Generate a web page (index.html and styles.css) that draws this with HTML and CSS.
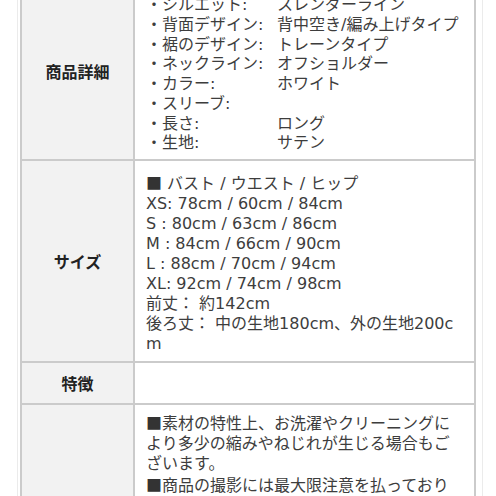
FILE: index.html
```html
<!DOCTYPE html>
<html lang="ja">
<head>
<meta charset="utf-8">
<title>商品詳細</title>
<link rel="stylesheet" href="styles.css">
</head>
<body>
<div class="page">
  <table class="spec">
    <tr>
      <th>商品詳細</th>
      <td class="detail">
        <dl class="kv">
          <dt>・シルエット:</dt><dd>スレンダーライン</dd>
          <dt>・背面デザイン:</dt><dd>背中空き/編み上げタイプ</dd>
          <dt>・裾のデザイン:</dt><dd>トレーンタイプ</dd>
          <dt>・ネックライン:</dt><dd>オフショルダー</dd>
          <dt>・カラー:</dt><dd>ホワイト</dd>
          <dt>・スリーブ:</dt><dd></dd>
          <dt>・長さ:</dt><dd>ロング</dd>
          <dt>・生地:</dt><dd>サテン</dd>
        </dl>
      </td>
    </tr>
    <tr>
      <th>サイズ</th>
      <td class="size">
        <p><span class="sq">■</span> バスト / ウエスト / ヒップ</p>
        <p>XS: 78cm / 60cm / 84cm</p>
        <p>S : 80cm / 63cm / 86cm</p>
        <p>M : 84cm / 66cm / 90cm</p>
        <p>L : 88cm / 70cm / 94cm</p>
        <p>XL: 92cm / 74cm / 98cm</p>
        <p>前丈： 約142cm</p>
        <p>後ろ丈： 中の生地180cm、外の生地200cm</p>
      </td>
    </tr>
    <tr class="feature">
      <th>特徴</th>
      <td></td>
    </tr>
    <tr>
      <th>注意事項</th>
      <td class="note">
        <p><span class="sq">■</span>素材の特性上、お洗濯やクリーニングにより多少の縮みやねじれが生じる場合もございます。</p>
        <p><span class="sq">■</span>商品の撮影には最大限注意を払っておりますが、閲覧時のモニター、環境により実際の商品と色味が異なって見える場合がございます。予めご了承ください。</p>
        <p><span class="sq">■</span>サイズは平置きで測定しておりますので、多少の誤差はご了承ください。</p>
      </td>
    </tr>
  </table>
</div>
</body>
</html>
```

FILE: styles.css
```css
html, body {
  margin: 0;
  padding: 0;
  background: #ffffff;
}

body {
  font-family: "DejaVu Sans", "Noto Sans CJK JP", sans-serif;
  font-size: 16px;
  line-height: 20px;
  color: #3d3d3d;
  overflow: hidden;
}

.page {
  margin-left: 17px;
  width: 464px;
  min-height: 520px;
  border-left: 1px solid #ebebeb;
  border-right: 1px solid #ebebeb;
  margin-top: -19px;
}

.spec {
  margin-left: 2px;
  border-collapse: separate;
  border-spacing: 0;
  table-layout: fixed;
  border-top: 2px solid #cbcbcb;
  border-left: 2px solid #cbcbcb;
  border-right: 2px solid #cbcbcb;
}

.spec th {
  width: 111px;
  padding: 0;
  background: #f2f2f2;
  border-right: 2px solid #cbcbcb;
  border-bottom: 2px solid #cbcbcb;
  font-family: "Noto Sans CJK JP", sans-serif;
  font-weight: 700;
  font-size: 16px;
  color: #222222;
  text-align: center;
  vertical-align: middle;
}

.spec td {
  width: 314px;
  padding: 0 14px 0 11px;
  border-bottom: 2px solid #cbcbcb;
  vertical-align: top;
  word-break: break-all;
}

.spec p {
  margin: 0;
}

.sq {
  font-family: "Noto Sans CJK JP", sans-serif;
  color: #333333;
  line-height: 20px;
}

.detail {
  padding-top: 12.4px !important;
  padding-bottom: 6px !important;
}

.kv {
  display: grid;
  grid-template-columns: 131px 1fr;
  grid-auto-rows: 19.7px;
  margin: 0;
}

.kv dt,
.kv dd {
  margin: 0;
  line-height: 19.7px;
  white-space: nowrap;
}

.size {
  padding-top: 11px !important;
  padding-bottom: 7px !important;
  height: 180px;
}

.feature th,
.feature td {
  height: 40px;
}

.note {
  padding-top: 7px !important;
  padding-bottom: 9px !important;
}
```
